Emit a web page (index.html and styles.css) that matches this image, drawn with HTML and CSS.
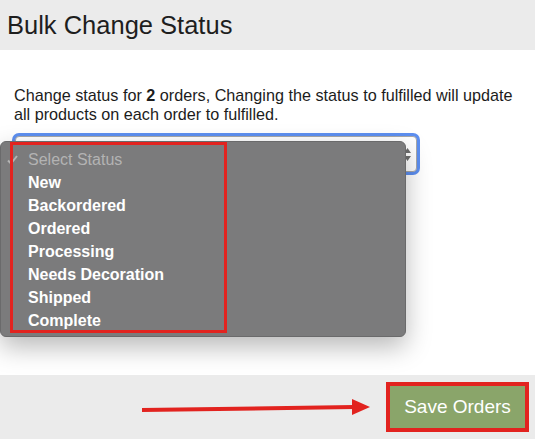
FILE: index.html
```html
<!DOCTYPE html>
<html lang="en">
<head>
  <meta charset="UTF-8">
  <meta name="viewport" content="width=device-width, initial-scale=1.0">
  <title>Bulk Change Status</title>
  <link rel="stylesheet" href="styles.css">
</head>
<body>
  <div class="modal">
    <div class="modal-header">
      <h3>Bulk Change Status</h3>
    </div>

    <div class="modal-body">
      <p>Change status for <strong>2</strong> orders, Changing the status to fulfilled will update all products on each order to fulfilled.</p>

      <div class="select-wrap">
        <div class="select-field">
          <svg class="select-arrows" width="7" height="13" viewBox="0 0 7 13">
            <path d="M3.5 0 L7 5 L0 5 Z M0 8 L7 8 L3.5 13 Z" fill="#6d6d6d"/>
          </svg>
        </div>

        <!-- open option list -->
        <ul class="select-menu">
          <li class="disabled">
            <svg class="check" width="11" height="10" viewBox="0 0 11 10">
              <path d="M1 5.5 L4 8.5 L10 1" fill="none" stroke="#b4b4b4" stroke-width="2"/>
            </svg>
            Select Status
          </li>
          <li>New</li>
          <li>Backordered</li>
          <li>Ordered</li>
          <li>Processing</li>
          <li>Needs Decoration</li>
          <li>Shipped</li>
          <li>Complete</li>
        </ul>
        <div class="mark-box"></div>
      </div>
    </div>

    <div class="modal-footer">
      <svg class="mark-arrow" width="228" height="16" viewBox="0 0 228 16">
        <line x1="0" y1="11" x2="212" y2="8" stroke="#e2231f" stroke-width="4"/>
        <path d="M210 0 L228 8 L210 16 Z" fill="#e2231f"/>
      </svg>
      <div class="mark-button">
        <button class="btn-save">Save Orders</button>
      </div>
    </div>
  </div>
</body>
</html>
```

FILE: styles.css
```css
body {
  margin: 0;
  font-family: "Liberation Sans", Arial, sans-serif;
  background-color: white;
  color: #222;
}
.modal-header {
  background-color: #ebebeb;
  padding: 11px 7px;
}
.modal-header h3 {
  margin: 0;
  font-size: 25.5px;
  line-height: 28px;
  font-weight: normal;
  color: #1e1e1e;
}
.modal-body {
  height: 325px;
  box-sizing: border-box;
  padding: 36px 12px 0;
}
.modal-body p {
  margin: 0;
  padding: 0 2px;
  font-size: 16.2px;
  line-height: 19px;
  color: #1c1c1c;
}
.select-wrap {
  position: relative;
  width: 408px;
  margin-top: 12px;
}
.select-field {
  margin: 3px;
  height: 36px;
  box-sizing: border-box;
  border: 1px solid #a8a8a8;
  border-radius: 4px;
  background: white;
  box-shadow: 0 0 0 3px #5d8ff0;
  display: flex;
  align-items: center;
  justify-content: flex-end;
  padding-right: 5px;
}
.select-menu {
  position: absolute;
  left: -12px;
  top: 5px;
  width: 406px;
  height: 196px;
  box-sizing: border-box;
  margin: 0;
  padding: 6px 0 0;
  list-style: none;
  background-color: #7b7b7c;
  border: 1px solid #6a6a6b;
  border-radius: 6px;
  box-shadow: 0 10px 26px rgba(0,0,0,0.28);
}
.select-menu li {
  position: relative;
  height: 23px;
  line-height: 23px;
  padding-left: 27px;
  font-size: 16px;
  font-weight: bold;
  color: #fff;
}
.select-menu li.disabled {
  color: #b3b3b3;
  font-weight: normal;
}
.check {
  position: absolute;
  left: 6px;
  top: 7px;
}
.mark-box {
  position: absolute;
  left: -2px;
  top: 6px;
  width: 217px;
  height: 191px;
  box-sizing: border-box;
  border: 3px solid #e2231f;
}
.modal-footer {
  height: 64px;
  background-color: #ebebeb;
  display: flex;
  align-items: center;
  justify-content: flex-end;
  gap: 16px;
  padding-right: 6px;
}
.mark-button {
  border: 4px solid #e2231f;
}
.btn-save {
  display: block;
  width: 135px;
  height: 42px;
  border: 0;
  background-color: #8aa56a;
  color: white;
  font-family: "Liberation Sans", Arial, sans-serif;
  font-size: 19px;
}
```
